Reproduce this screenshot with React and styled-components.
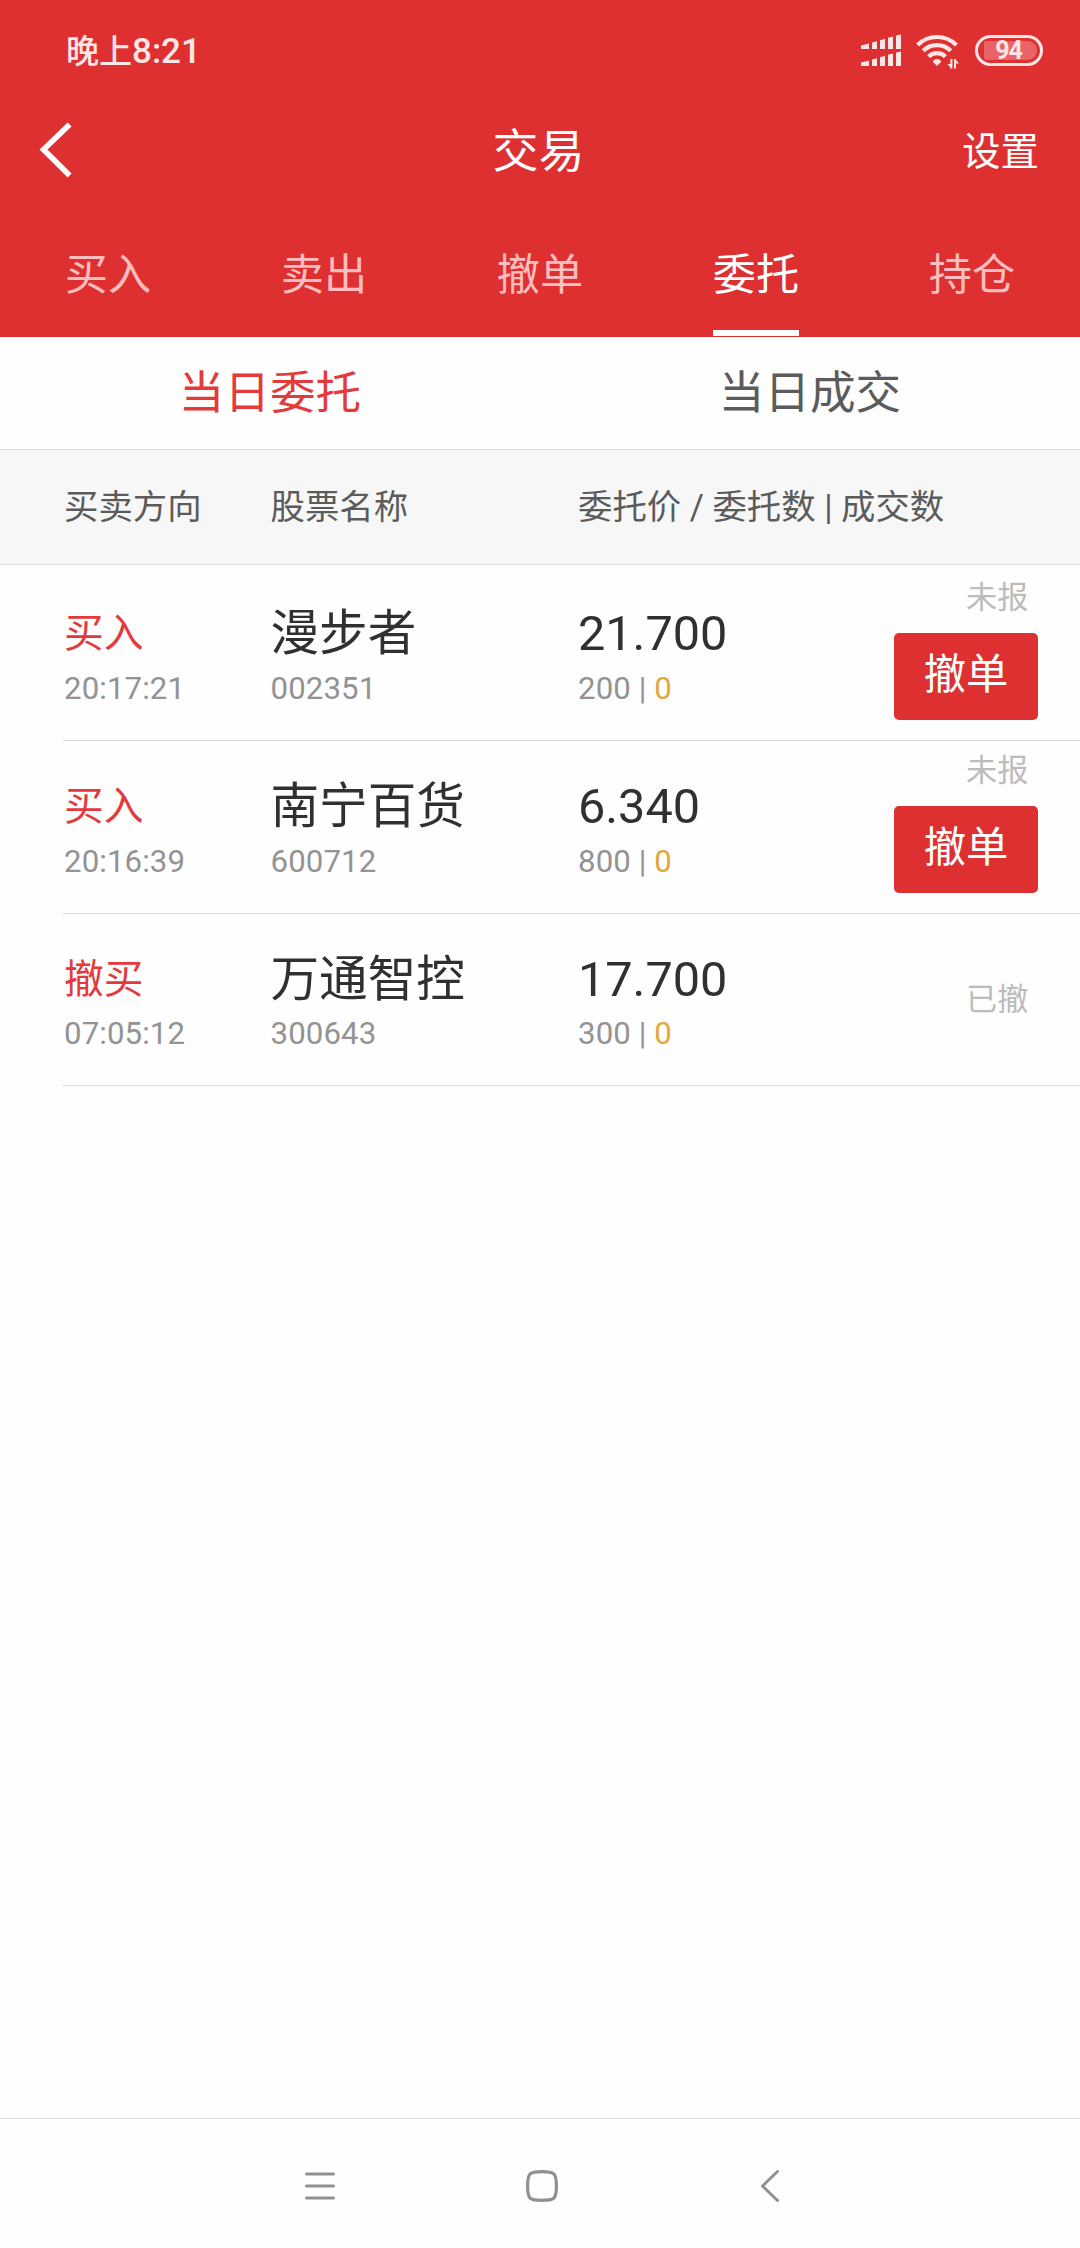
import React from 'react';
import styled, { createGlobalStyle } from 'styled-components';

const GlobalStyle = createGlobalStyle`
  * { box-sizing: border-box; }
  body {
    margin: 0;
    background: #fefefe;
    font-family: Roboto, "Noto Sans CJK SC", sans-serif;
    -webkit-font-smoothing: antialiased;
  }
  button { font-family: inherit; border: 0; background: none; padding: 0; margin: 0; }
`;

const Screen = styled.div`
  width: 1080px;
  height: 2248px;
  display: flex;
  flex-direction: column;
  background: #fefefe;
  overflow: hidden;
`;

const Header = styled.header`
  height: 337px;
  background: #de3031;
  color: #fff;
  display: flex;
  flex-direction: column;
`;

const StatusBar = styled.div`
  height: 100px;
  padding: 1px 37px 0 66px;
  display: flex;
  align-items: center;
  justify-content: space-between;
  color: #ffe6e6;
`;

const Clock = styled.span`
  font-size: 35px;
  font-weight: 500;
  line-height: 40px;
  padding-top: 2px;
  display: flex;
  align-items: baseline;
  white-space: nowrap;
`;

const ClockPeriod = styled.span`
  font-size: 33px;
`;

const StatusIcons = styled.div`
  display: flex;
  align-items: center;
  height: 34px;
`;

const SignalIcon = styled.svg`
  width: 40px;
  height: 34px;
  margin-right: 15px;
`;

const WifiIcon = styled.svg`
  width: 44px;
  height: 36px;
  margin-right: 15px;
`;

const Battery = styled.div`
  width: 68px;
  height: 31px;
  border: 3px solid #ffe6e6;
  border-radius: 16px;
  padding: 3px 3px 3px 6px;
`;

const BatteryLevel = styled.div`
  height: 100%;
  border-radius: 2px 10px 10px 2px;
  background: #e96466;
  color: #ffe6e6;
  font-size: 25px;
  font-weight: 700;
  line-height: 19px;
  text-align: center;
  letter-spacing: -1.2px;
  padding-right: 4px;
`;

const TitleBar = styled.div`
  height: 104px;
  padding: 0 41px 0 38px;
  display: grid;
  grid-template-columns: 1fr auto 1fr;
  align-items: center;
`;

const BackButton = styled.button`
  width: 36px;
  height: 60px;
  margin-bottom: 4px;
  svg { display: block; width: 36px; height: 60px; }
`;

const Title = styled.h1`
  margin: 0 0 2px;
  font-size: 46px;
  font-weight: 400;
  line-height: 60px;
`;

const Settings = styled.button`
  justify-self: end;
  color: #fff;
  font-size: 38.5px;
  line-height: 60px;
`;

const Tabs = styled.nav`
  height: 133px;
  display: grid;
  grid-template-columns: repeat(5, 1fr);
`;

const Tab = styled.button`
  justify-self: center;
  height: 132px;
  font-size: 43.2px;
  line-height: 60px;
  padding-top: 42px;
  display: flex;
  flex-direction: column;
  justify-content: space-between;
  color: ${(p) => (p.$active ? '#fff' : '#ffbdbf')};
  border-bottom: 6px solid ${(p) => (p.$active ? '#fff' : 'transparent')};
`;

const SubTabs = styled.div`
  height: 113px;
  border-bottom: 1px solid #dcdcdc;
  display: grid;
  grid-template-columns: 1fr 1fr;
`;

const SubTab = styled.button`
  font-size: 45.6px;
  line-height: 110px;
  padding-top: 2px;
  color: ${(p) => (p.$active ? '#e33a3c' : '#5b5b5b')};
`;

const columns = '206.5px 307.5px 1fr';

const TableHead = styled.div`
  height: 115px;
  padding-left: 64px;
  background: #f7f7f7;
  border-bottom: 1px solid #dcdcdc;
  display: grid;
  grid-template-columns: ${columns};
  align-items: center;
  font-size: 34.4px;
  line-height: 60px;
  color: #5b5b5b;
  white-space: pre;
`;

const List = styled.main`
  flex: 1;
  padding-top: 3.4px;
`;

const Row = styled.article`
  height: 172.67px;
  margin-left: 63px;
  padding-left: 1px;
  border-bottom: 1px solid #dadada;
  display: grid;
  grid-template-columns: ${columns} auto;
`;

const Cell = styled.div`
  padding-top: 38px;
  display: flex;
  flex-direction: column;
  gap: 6.6px;
  white-space: nowrap;
`;

const Side = styled.div`
  height: 56px;
  line-height: 56px;
  font-size: 39.8px;
  color: #e33a3c;
`;

const Main = styled.div`
  height: 56px;
  line-height: 56px;
  font-size: 48.6px;
  color: #303030;
`;

const Sub = styled.div`
  height: 40px;
  line-height: 40px;
  font-size: 31.2px;
  letter-spacing: 0.1px;
  color: #939393;
`;

const Filled = styled.span`
  color: #e6a63f;
`;

const StateCell = styled.div`
  width: 144px;
  margin-right: 42px;
  display: flex;
  flex-direction: column;
  justify-content: center;
  align-items: flex-end;
  gap: 17px;
  padding-bottom: ${(p) => (p.$withAction ? '8px' : '0')};
`;

const State = styled.span`
  font-size: 31.2px;
  line-height: 36px;
  padding-right: 9.5px;
  color: #bcbcbc;
`;

const CancelButton = styled.button`
  width: 144px;
  height: 87px;
  padding-bottom: 3px;
  border-radius: 5px;
  background: #de3031;
  color: #fff;
  font-size: 42.3px;
  line-height: 84px;
`;

const NavBar = styled.footer`
  height: 130px;
  border-top: 1px solid #e2e2e2;
  padding: 5px 300px 0 304px;
  display: grid;
  grid-template-columns: 1fr auto 1fr;
  align-items: center;
  svg { display: block; }
  svg:last-child { justify-self: end; }
`;

const orders = [
  { side: '买入', time: '20:17:21', name: '漫步者', code: '002351', price: '21.700', amount: 200, filled: 0, state: '未报', cancelable: true },
  { side: '买入', time: '20:16:39', name: '南宁百货', code: '600712', price: '6.340', amount: 800, filled: 0, state: '未报', cancelable: true },
  { side: '撤买', time: '07:05:12', name: '万通智控', code: '300643', price: '17.700', amount: 300, filled: 0, state: '已撤', cancelable: false },
];

const tabs = ['买入', '卖出', '撤单', '委托', '持仓'];

function Signal() {
  const bars = (y) => (
    <g transform={`translate(0 ${y})`}>
      <path d="M0 10.6 L8 8.4 V14 H0 Z" />
      <path d="M11 7.6 L16 6.2 V14 H11 Z" />
      <path d="M19 5.2 L24 3.8 V14 H19 Z" />
      <path d="M27 2.8 L32 1.4 V14 H27 Z" />
      <path d="M35 0.6 L40 -0.6 V14 H35 Z" />
    </g>
  );
  return (
    <SignalIcon viewBox="0 0 40 34" fill="#ffe6e6">
      {bars(1)}
      {bars(18)}
    </SignalIcon>
  );
}

function Wifi() {
  return (
    <WifiIcon viewBox="0 0 44 36" fill="none" stroke="#ffe6e6" strokeWidth="4.2">
      <path d="M1.6 12 A27.5 27.5 0 0 1 40.4 12" />
      <path d="M7.2 17.8 A19.4 19.4 0 0 1 34.8 17.8" />
      <path d="M12.6 23.6 A11.8 11.8 0 0 1 29.4 23.6" />
      <path d="M21 33 L17 29 Q17.2 26 21 26 Q24.8 26 25 29 Z" fill="#ffe6e6" stroke="none" />
      <path d="M35.4 26 V35.5 M39 35.5 V26" strokeWidth="2" />
      <path d="M31.5 31 H35.4 V35.5 Z M43 30.5 H39 V26 Z" fill="#ffe6e6" stroke="none" />
    </WifiIcon>
  );
}

export default function App() {
  return (
    <>
      <GlobalStyle />
      <Screen>
        <Header>
          <StatusBar>
            <Clock><ClockPeriod>晚上</ClockPeriod>8:21</Clock>
            <StatusIcons>
              <Signal />
              <Wifi />
              <Battery><BatteryLevel>94</BatteryLevel></Battery>
            </StatusIcons>
          </StatusBar>
          <TitleBar>
            <BackButton aria-label="返回">
              <svg viewBox="0 0 36 60" fill="none" stroke="#fff" strokeWidth="5.6">
                <path d="M31.6 4.5 L5.5 29.5 L31.6 55.5" />
              </svg>
            </BackButton>
            <Title>交易</Title>
            <Settings>设置</Settings>
          </TitleBar>
          <Tabs>
            {tabs.map((t) => <Tab key={t} $active={t === '委托'}>{t}</Tab>)}
          </Tabs>
        </Header>
        <SubTabs>
          <SubTab $active>当日委托</SubTab>
          <SubTab>当日成交</SubTab>
        </SubTabs>
        <TableHead>
          <span>买卖方向</span>
          <span>股票名称</span>
          <span>委托价 / 委托数 | 成交数</span>
        </TableHead>
        <List>
          {orders.map((o) => (
            <Row key={o.code}>
              <Cell>
                <Side>{o.side}</Side>
                <Sub>{o.time}</Sub>
              </Cell>
              <Cell>
                <Main>{o.name}</Main>
                <Sub>{o.code}</Sub>
              </Cell>
              <Cell>
                <Main>{o.price}</Main>
                <Sub>{o.amount} | <Filled>{o.filled}</Filled></Sub>
              </Cell>
              <StateCell $withAction={o.cancelable}>
                <State>{o.state}</State>
                {o.cancelable && <CancelButton>撤单</CancelButton>}
              </StateCell>
            </Row>
          ))}
        </List>
        <NavBar>
          <svg width="32" height="34" viewBox="0 0 32 34" stroke="#909090" strokeWidth="3" strokeLinecap="round">
            <path d="M2.5 5 H29.5 M2.5 17 H29.5 M2.5 29 H29.5" />
          </svg>
          <svg width="34" height="34" viewBox="0 0 34 34" fill="none" stroke="#909090" strokeWidth="3.2">
            <path d="M17 2.6 C29 2.6 31.4 3.4 31.4 17 C31.4 30.6 29 31.4 17 31.4 C5 31.4 2.6 30.6 2.6 17 C2.6 3.4 5 2.6 17 2.6 Z" />
          </svg>
          <svg width="20" height="34" viewBox="0 0 20 34" fill="none" stroke="#909090" strokeWidth="3" strokeLinecap="round" strokeLinejoin="round">
            <path d="M17.5 2.5 L2.5 17 L17.5 31.5" />
          </svg>
        </NavBar>
      </Screen>
    </>
  );
}
